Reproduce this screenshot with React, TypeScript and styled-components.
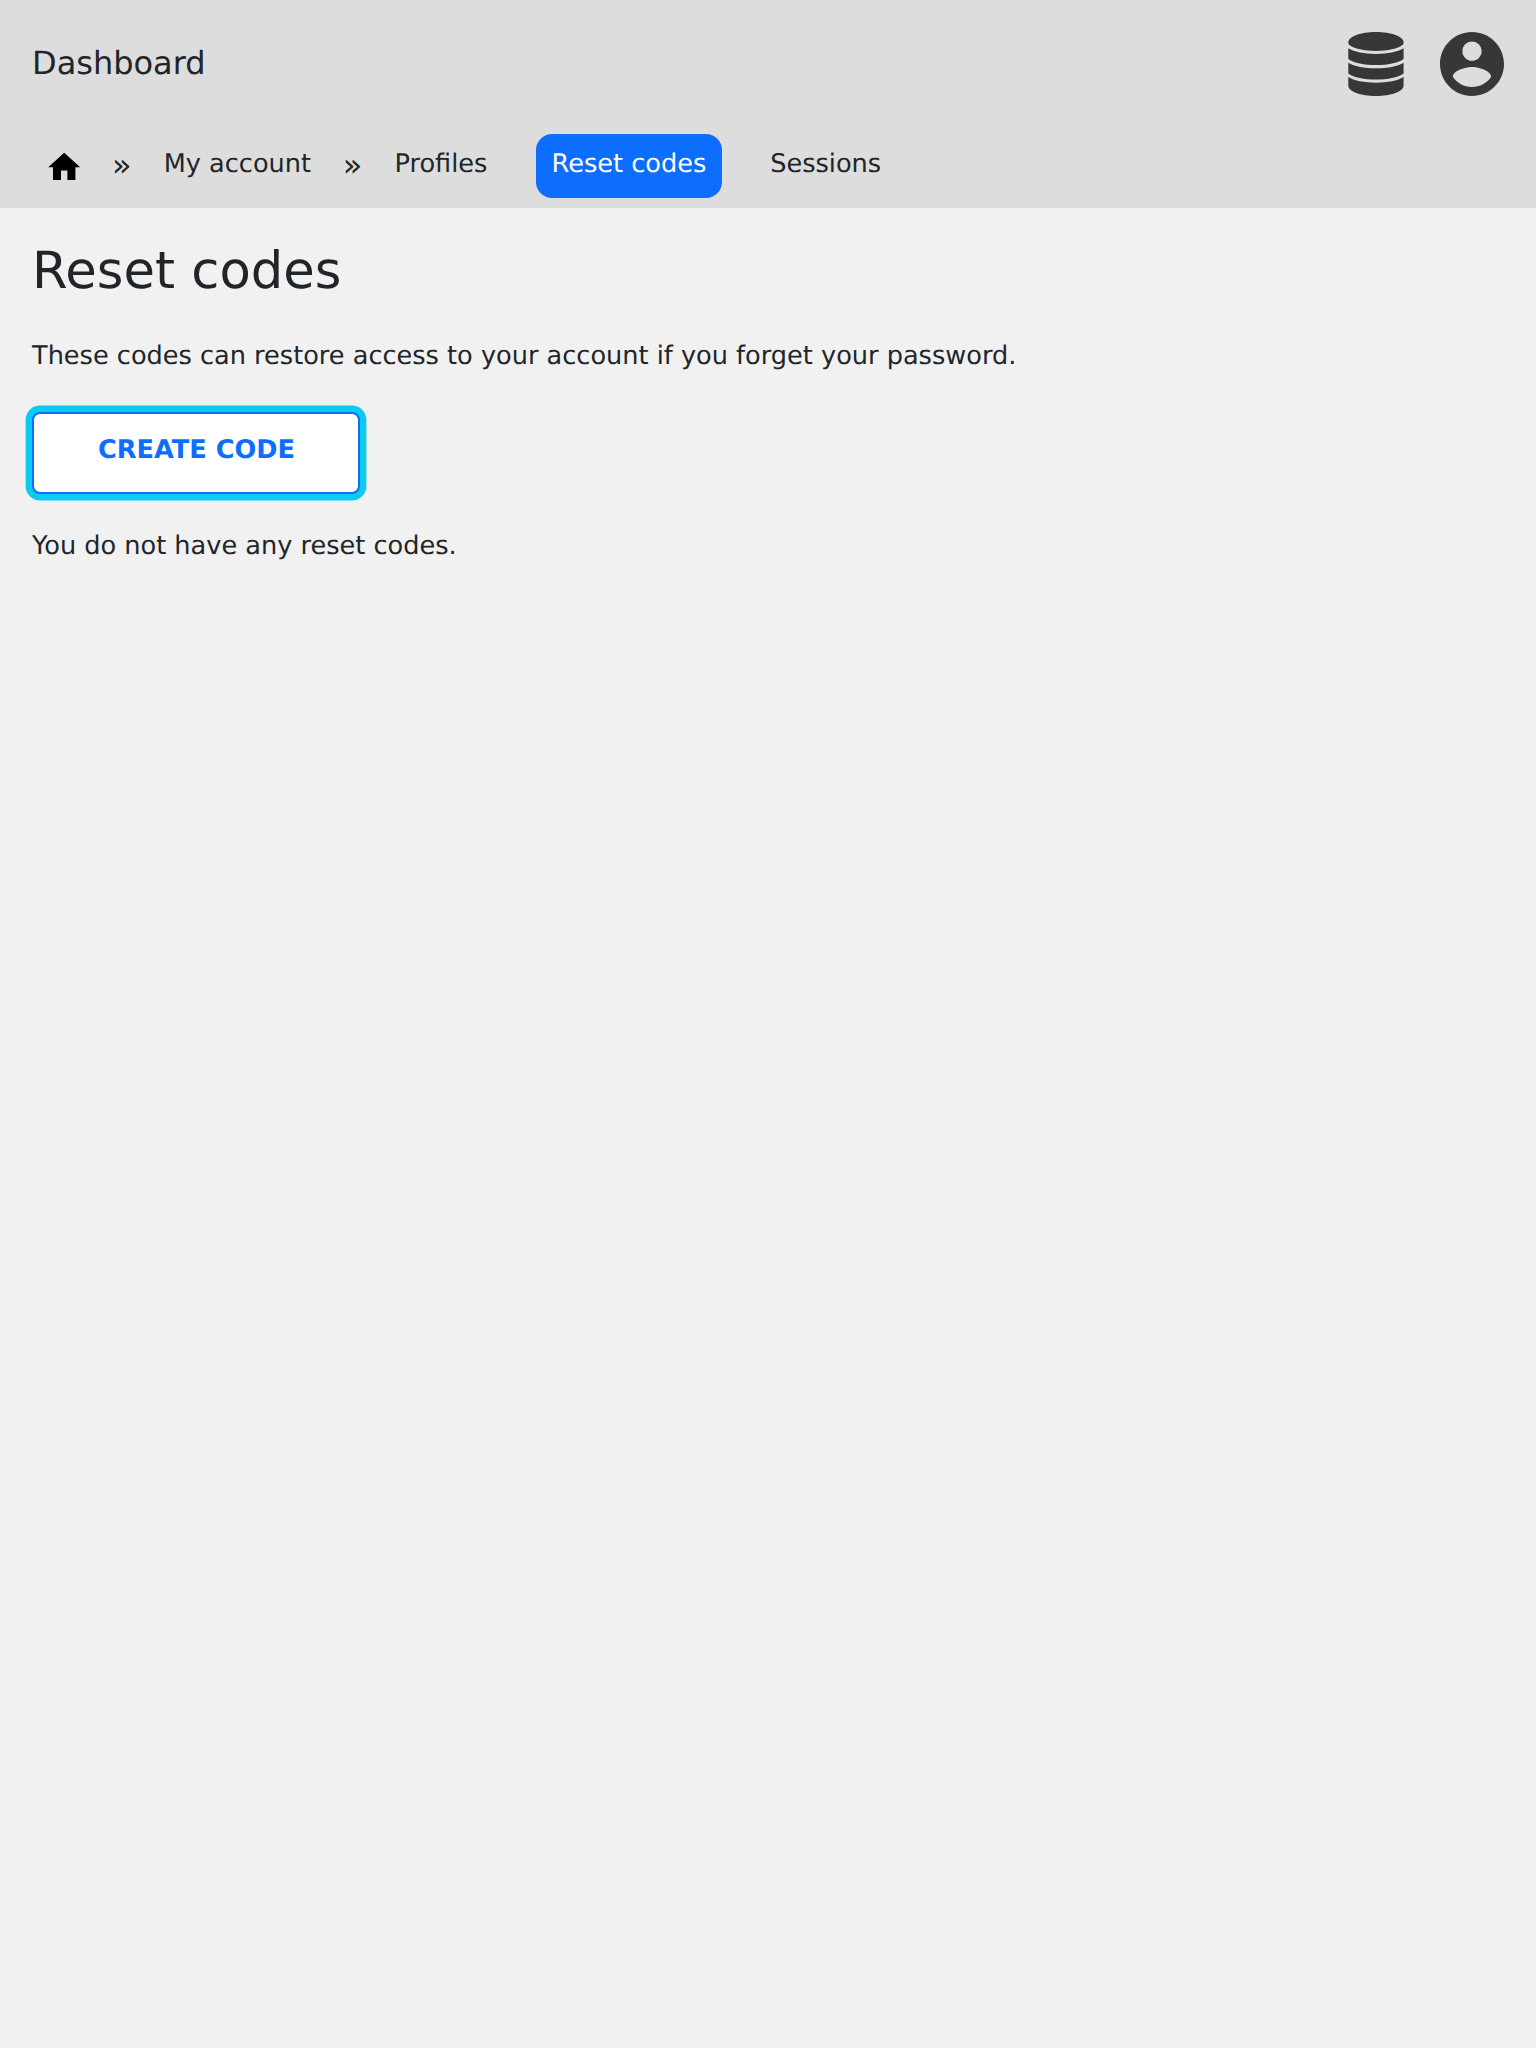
import React from 'react';
import styled, { createGlobalStyle } from 'styled-components';

const GlobalStyle = createGlobalStyle`
  * { box-sizing: border-box; }
  body {
    margin: 0;
    background: #f1f1f1;
    color: #212529;
    font-family: "DejaVu Sans", sans-serif;
    font-size: 25.6px;
    line-height: 38.4px;
    text-rendering: geometricPrecision;
  }
`;
const Header = styled.header`
  height: 208px;
  background: #ddd;
`;
const TopBar = styled.div`
  display: flex;
  align-items: center;
  justify-content: space-between;
  height: 128px;
  padding: 0 32px;
`;
const Title = styled.div`
  font-size: 32px;
  line-height: 48px;
  margin-bottom: 2px;
`;
const Actions = styled.div`
  display: flex;
  align-items: center;
  gap: 36px;
  color: #373737;
`;
const Icon = styled.svg`
  display: block;
  fill: currentColor;
`;
const Crumbs = styled.nav`
  display: flex;
  align-items: center;
  height: 76px;
  padding: 0 32px;
`;
const HomeLink = styled.a`
  display: flex;
  width: 64px;
  justify-content: center;
  padding-top: 2px;
  color: #000;
`;
const Separator = styled.span`
  width: 51.6px;
  padding-bottom: 2px;
  text-align: center;
  font-size: 32px;
`;
const Crumb = styled.a<{ $active?: boolean; $gap?: number }>`
  height: 64px;
  padding: 11px 15.7px 14px 16px;
  margin-left: ${p => p.$gap ?? 0.15}px;
  border-radius: 16px;
  white-space: nowrap;
  color: ${p => (p.$active ? '#fff' : 'inherit')};
  background: ${p => (p.$active ? '#0d6efd' : 'transparent')};
`;
const Main = styled.main`
  padding: 33px 32px 32px;
`;
const Heading = styled.h1`
  margin: 0 0 35px;
  font-size: 51.2px;
  font-weight: 400;
  line-height: 61.4px;
`;
const Text = styled.p`
  margin: 0;
`;
const CreateButton = styled.button`
  display: block;
  width: 328px;
  height: 82px;
  margin: 36px 0 33px;
  padding: 0 0 6px 1px;
  border: 2px solid #0d6efd;
  border-radius: 8px;
  box-shadow: 0 0 0 6.4px #0dcaf0;
  outline: none;
  background: #fff;
  color: #0d6efd;
  font: bold 25.6px/38.4px "DejaVu Sans", sans-serif;
  text-rendering: inherit;
`;

export default function App() {
  return (
    <>
      <GlobalStyle />
      <Header>
        <TopBar>
          <Title>Dashboard</Title>
          <Actions>
            <Icon width="56" height="64" viewBox="-0.3 0 56.7 64" preserveAspectRatio="none">
              <path d="M28 0C43.500 0 56 4.500 56 10.500Q56 11.800 55.200 12.800C50 16.800 40 19 28 19S6 16.800 0.800 12.800Q0 11.800 0 10.500C0 4.500 12.500 0 28 0Z" />
              <path d="M0 16.300C6 19.900 16 21.900 28 21.900S50 19.900 56 16.300V27C50 31 40 33 28 33S6 31 0 27Z" />
              <path d="M0 30.700C6 34.300 16 36.300 28 36.300S50 34.300 56 30.700V41.500C50 45.500 40 47.500 28 47.500S6 45.500 0 41.500Z" />
              <path d="M0 45C6 48.700 16 50.700 28 50.700S50 48.700 56 45V53.500C56 59.500 43.500 64 28 64S0 59.500 0 53.500Z" />
            </Icon>
            <Icon width="64" height="64" viewBox="2 2 20 20">
              <path d="M12 2C6.480 2 2 6.480 2 12s4.480 10 10 10 10-4.480 10-10S17.520 2 12 2zm0 3c1.660 0 3 1.340 3 3s-1.340 3-3 3-3-1.340-3-3 1.340-3 3-3zm0 14.200c-2.500 0-4.710-1.280-6-3.220.03-1.990 4-3.080 6-3.080 1.990 0 5.970 1.090 6 3.080-1.290 1.940-3.500 3.220-6 3.220z" />
            </Icon>
          </Actions>
        </TopBar>
        <Crumbs>
          <HomeLink>
            <Icon width="38.4" height="38.4" viewBox="0 0 24 24">
              <path d="M10 20v-6h4v6h5v-8h3L12 3 2 12h3v8z" />
            </Icon>
          </HomeLink>
          <Separator>»</Separator>
          <Crumb>My account</Crumb>
          <Separator>»</Separator>
          <Crumb>Profiles</Crumb>
          <Crumb $active $gap={32.5}>Reset codes</Crumb>
          <Crumb $gap={32.2}>Sessions</Crumb>
        </Crumbs>
      </Header>
      <Main>
        <Heading>Reset codes</Heading>
        <Text>These codes can restore access to your account if you forget your password.</Text>
        <CreateButton>CREATE CODE</CreateButton>
        <Text>You do not have any reset codes.</Text>
      </Main>
    </>
  );
}
